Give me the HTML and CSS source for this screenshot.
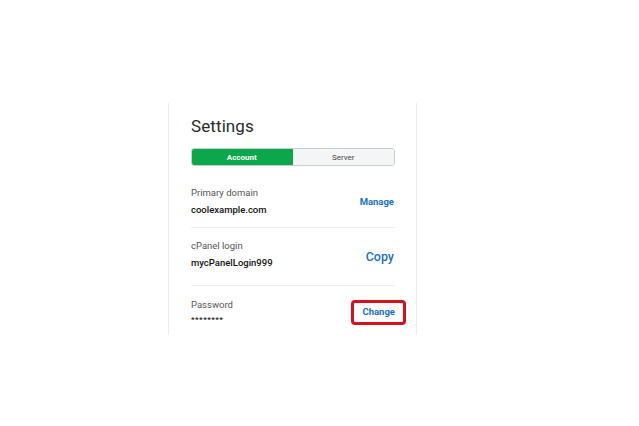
FILE: index.html
```html
<!DOCTYPE html>
<html>
<head>
<meta charset="utf-8">
<link rel="stylesheet" href="styles.css">
</head>
<body>
<div class="page">
  <div class="card">
    <h1 class="title">Settings</h1>
    <div class="tabs">
      <div class="tab tab-active">Account</div>
      <div class="tab">Server</div>
    </div>
    <div class="row row-first">
      <div class="info">
        <div class="label">Primary domain</div>
        <div class="value">coolexample.com</div>
      </div>
      <a class="action">Manage</a>
    </div>
    <div class="row row-mid">
      <div class="info">
        <div class="label">cPanel login</div>
        <div class="value">mycPanelLogin999</div>
      </div>
      <a class="action action-big">Copy</a>
    </div>
    <div class="row row-last">
      <div class="info">
        <div class="label">Password</div>
        <div class="value value-pw">********</div>
      </div>
      <a class="action action-boxed">Change</a>
    </div>
  </div>
</div>
</body>
</html>
```
FILE: styles.css
```css
html, body {
  margin: 0;
  padding: 0;
  background: #ffffff;
}
body {
  width: 639px;
  height: 426px;
  overflow: hidden;
  font-family: Roboto, "Liberation Sans", sans-serif;
}
.page {
  padding-top: 103px;
  padding-left: 168px;
}
.card {
  width: 249px;
  height: 232px;
  border-left: 1px solid #ececec;
  border-right: 1px solid #ececec;
  padding: 0 21px 0 22px;
  box-sizing: border-box;
}
.title {
  margin: 0;
  padding-top: 13px;
  font-size: 17px;
  font-weight: 400;
  color: #2b2b2b;
  line-height: 20px;
  letter-spacing: 0.1px;
}
.tabs {
  display: flex;
  margin-top: 12px;
  height: 18px;
  width: 204px;
  border-radius: 3px;
  overflow: hidden;
  border: 1px solid #c9ccd0;
  box-sizing: border-box;
}
.tab {
  flex: 1;
  display: flex;
  align-items: center;
  justify-content: center;
  font-size: 8px;
  color: #4a4a4a;
  background: #f4f5f6;
}
.tab-active {
  background: #0aa84a;
  color: #fff;
  font-weight: 700;
  margin: -1px 0 -1px -1px;
}
.row {
  display: flex;
  align-items: center;
  justify-content: space-between;
  width: 204px;
  border-bottom: 1px solid #eeeeee;
  height: 58px;
  box-sizing: border-box;
}
.row-first {
  height: 62px;
  padding-top: 10px;
}
.row-mid .info {
  margin-bottom: 4px;
}
.row-last {
  border-bottom: none;
  padding-bottom: 6px;
}
.info {
  display: flex;
  flex-direction: column;
}
.label {
  font-size: 9.5px;
  color: #555;
  line-height: 12px;
}
.value {
  font-size: 9.5px;
  color: #111;
  font-weight: 500;
  line-height: 12px;
  margin-top: 5px;
}
.value-pw {
  margin-top: 3px;
  letter-spacing: 0.5px;
  font-size: 8px;
}
.action {
  color: #1a6fc9;
  font-size: 9.5px;
  font-weight: 700;
  margin-right: 1px;
}
.action-big {
  font-size: 12.5px;
  font-weight: 500;
}
.action-boxed {
  border: 3px solid #d6101e;
  border-radius: 4px;
  padding: 3.5px 8px;
  margin-right: -11px;
  font-size: 9.5px;
  line-height: 12px;
}
```
